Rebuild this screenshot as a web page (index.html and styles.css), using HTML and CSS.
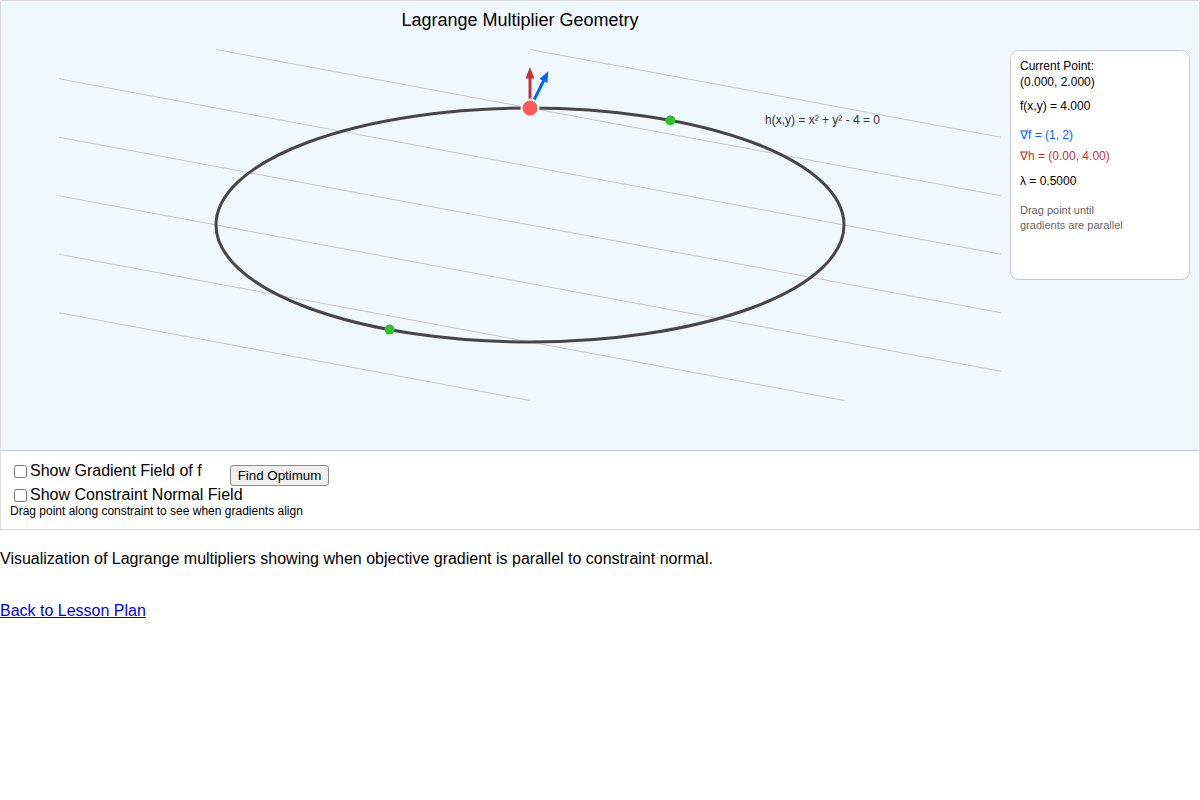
FILE: index.html
```html
<!DOCTYPE html>
<html lang="en">
<head>
<meta charset="utf-8">
<title>Lagrange Multiplier Geometry</title>
<link rel="stylesheet" href="styles.css">
</head>
<body>
<main class="sim">
  <svg class="canvas" viewBox="1 1 1198 449" width="1198" height="449" xmlns="http://www.w3.org/2000/svg">
    <rect x="0" y="0" width="1200" height="451" fill="#f0f8ff"/>
    <text class="title" x="520" y="26" text-anchor="middle">Lagrange Multiplier Geometry</text>
    <g class="levels">
      <line x1="530" y1="49.5" x2="1001" y2="137.25"/>
      <line x1="216" y1="49.5" x2="1001" y2="195.75"/>
      <line x1="59" y1="78.75" x2="1001" y2="254.25"/>
      <line x1="59" y1="137.25" x2="1001" y2="312.75"/>
      <line x1="59" y1="195.75" x2="1001" y2="371.25"/>
      <line x1="59" y1="254.25" x2="844" y2="400.5"/>
      <line x1="59" y1="312.75" x2="530" y2="400.5"/>
    </g>
    <ellipse class="constraint" cx="530" cy="225" rx="314" ry="117"/>
    <text class="hlabel" x="765" y="124">h(x,y) = x² + y² - 4 = 0</text>
    <circle class="opt" cx="670.4" cy="120.4" r="5"/>
    <circle class="opt" cx="389.6" cy="329.6" r="5"/>
    <g class="arrow-red">
      <line x1="530" y1="108" x2="530" y2="78"/>
      <polygon points="530,67 525.5,78.5 534.5,78.5"/>
    </g>
    <g class="arrow-blue">
      <line x1="530" y1="108" x2="543.6" y2="80.8"/>
      <polygon points="548.3,71.3 539.4,78.9 547.5,82.9"/>
    </g>
    <circle class="point" cx="530" cy="108" r="8.5"/>
    <rect class="panel" x="1010.5" y="50.5" width="179" height="229" rx="8" ry="8"/>
    <g class="info">
      <text x="1020" y="70">Current Point:</text>
      <text x="1020" y="85.5">(0.000, 2.000)</text>
      <text x="1020" y="110">f(x,y) = 4.000</text>
      <text class="blue" x="1020" y="139">∇f = (1, 2)</text>
      <text class="red" x="1020" y="160">∇h = (0.00, 4.00)</text>
      <text x="1020" y="185">λ = 0.5000</text>
      <text class="note" x="1020" y="214">Drag point until</text>
      <text class="note" x="1020" y="229">gradients are parallel</text>
    </g>
  </svg>
  <div class="controls">
    <div class="row">
      <label class="cb"><input type="checkbox">Show Gradient Field of f</label>
      <button class="btn" type="button">Find Optimum</button>
    </div>
    <label class="cb"><input type="checkbox">Show Constraint Normal Field</label>
    <div class="hint">Drag point along constraint to see when gradients align</div>
  </div>
</main>
<p class="desc">Visualization of Lagrange multipliers showing when objective gradient is parallel to constraint normal.</p>
<p class="back"><a href="#">Back to Lesson Plan</a></p>
</body>
</html>
```

FILE: styles.css
```css
html, body {
  margin: 0;
  padding: 0;
  background: #fff;
  font-family: "Liberation Sans", Arial, Helvetica, sans-serif;
  color: #000;
}

.sim {
  display: block;
  width: 1200px;
  box-sizing: border-box;
  border: 1px solid #dcdcdc;
}

.canvas {
  display: block;
  width: 1198px;
  height: 449px;
  font-family: "Liberation Sans", Arial, Helvetica, sans-serif;
}

.title {
  font-size: 18px;
  fill: #000;
}

.levels line {
  stroke: #c8c8c8;
  stroke-width: 1;
}

.constraint {
  fill: none;
  stroke: #464646;
  stroke-width: 3;
}

.hlabel {
  font-size: 12px;
  fill: #333;
}

.opt {
  fill: #32c032;
}

.arrow-red line {
  stroke: #c83232;
  stroke-width: 3;
}
.arrow-red polygon {
  fill: #c83232;
}

.arrow-blue line {
  stroke: #0064ff;
  stroke-width: 3;
}
.arrow-blue polygon {
  fill: #0064ff;
}

.point {
  fill: #ff5a5a;
  stroke: #fff;
  stroke-width: 2;
}

.panel {
  fill: #fff;
  stroke: #c8c8c8;
  stroke-width: 1;
}

.info text {
  font-size: 12px;
  fill: #000;
}
.info .blue {
  fill: #0064ff;
}
.info .red {
  fill: #c83232;
}
.info .note {
  font-size: 11px;
  fill: #666;
}

.controls {
  box-sizing: border-box;
  height: 79px;
  border-top: 1px solid #c8c8c8;
  padding: 11px 9px 0;
  background: #fff;
  display: flex;
  flex-direction: column;
  align-items: flex-start;
}

.row {
  display: flex;
  align-items: flex-start;
}

.cb {
  display: flex;
  align-items: center;
  font-size: 16px;
  line-height: 18px;
  height: 18px;
}

.cb input {
  width: 13px;
  height: 13px;
  margin: 1px 3px 0 4px;
}

.btn {
  margin: 3px 0 0 28px;
  font-family: "Liberation Sans", Arial, Helvetica, sans-serif;
  font-size: 13.33px;
  line-height: 15px;
  padding: 2px 7px;
  border: 1px solid #8a8a8a;
  border-radius: 3px;
  background: #f0f0f0;
  color: #000;
}

.hint {
  font-size: 12px;
  line-height: 14px;
}

.desc {
  margin: 20px 0 0;
  font-size: 16px;
}

.back {
  margin: 34px 0 0;
  font-size: 16px;
}

.back a {
  color: #0000ee;
}
```
